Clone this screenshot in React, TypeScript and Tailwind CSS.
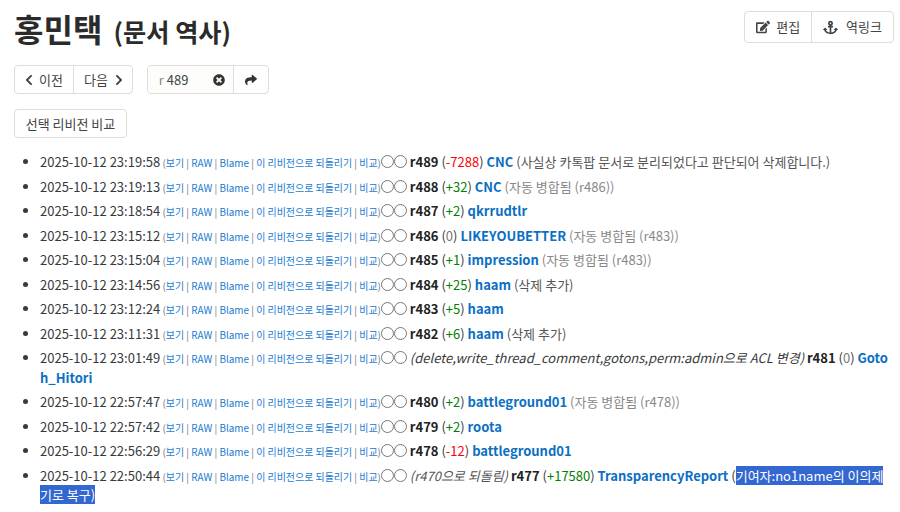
import React from 'react';
import { FaAnchor, FaChevronLeft, FaChevronRight, FaEdit, FaShare, FaTimesCircle } from 'react-icons/fa';

type Rev = {
  date: string;
  id: string;
  diff: string;
  user: string;
  note?: string;
  auto?: boolean;
  italic?: string;
};

const revisions: Rev[] = [
  { date: '2025-10-12 23:19:58', id: 'r489', diff: '-7288', user: 'CNC', note: '(사실상 카톡팝 문서로 분리되었다고 판단되어 삭제합니다.)' },
  { date: '2025-10-12 23:19:13', id: 'r488', diff: '+32', user: 'CNC', note: '(자동 병합됨 (r486))', auto: true },
  { date: '2025-10-12 23:18:54', id: 'r487', diff: '+2', user: 'qkrrudtlr' },
  { date: '2025-10-12 23:15:12', id: 'r486', diff: '0', user: 'LIKEYOUBETTER', note: '(자동 병합됨 (r483))', auto: true },
  { date: '2025-10-12 23:15:04', id: 'r485', diff: '+1', user: 'impression', note: '(자동 병합됨 (r483))', auto: true },
  { date: '2025-10-12 23:14:56', id: 'r484', diff: '+25', user: 'haam', note: '(삭제 추가)' },
  { date: '2025-10-12 23:12:24', id: 'r483', diff: '+5', user: 'haam' },
  { date: '2025-10-12 23:11:31', id: 'r482', diff: '+6', user: 'haam', note: '(삭제 추가)' },
  { date: '2025-10-12 23:01:49', id: 'r481', diff: '0', user: 'Gotoh_Hitori', italic: '(delete,write_thread_comment,gotons,perm:admin으로 ACL 변경)' },
  { date: '2025-10-12 22:57:47', id: 'r480', diff: '+2', user: 'battleground01', note: '(자동 병합됨 (r478))', auto: true },
  { date: '2025-10-12 22:57:42', id: 'r479', diff: '+2', user: 'roota' },
  { date: '2025-10-12 22:56:29', id: 'r478', diff: '-12', user: 'battleground01' },
];

const Diff = ({ value }: { value: string }) => (
  <span>
    (
    <span className={value.startsWith('+') ? 'text-[#008000]' : value.startsWith('-') ? 'text-[#ff0000]' : 'text-[#777]'}>{value}</span>
    )
  </span>
);

const Tools = () => (
  <span className="text-[9.95px] leading-none text-[#777]">
    {' ('}
    <a className="text-[#1a7bd0]">보기</a> | <a className="text-[#1a7bd0]">RAW</a> | <a className="text-[#1a7bd0]">Blame</a> |{' '}
    <a className="text-[#1a7bd0]">이 리비전으로 되돌리기</a> | <a className="text-[#1a7bd0]">비교</a>)
  </span>
);

const Radios = () => (
  <>
    <input type="radio" name="oldrev" className="m-0 h-[13px] w-[13px] align-[-1px]" readOnly />
    <input type="radio" name="rev" className="m-0 h-[13px] w-[13px] align-[-1px]" readOnly />
  </>
);

const Row = ({ rev }: { rev: Rev }) => (
  <li className="mb-[5px]">
    {rev.date}
    <Tools />
    <Radios />{' '}
    {rev.italic && <i>{rev.italic} </i>}
    <b className="text-[#222]">{rev.id}</b> <Diff value={rev.diff} />{' '}
    <a className="font-bold text-[#0b6fc4]">{rev.user}</a>
    {rev.note && <span className={rev.auto ? 'text-[#888]' : 'text-[#555]'}> {rev.note}</span>}
  </li>
);

export default function App() {
  return (
    <div className="h-[512px] w-[900px] overflow-hidden bg-white pl-[14px] pr-[6px] font-['Noto_Sans_CJK_KR','Noto_Sans',sans-serif] text-[#373a3c]">
      <div className="flex items-start justify-between pt-[11px]">
        <h1 className="mt-[-3px] text-[32px] leading-[40px] font-bold text-[#2b2b2b]">
          홍민택 <small className="ml-[4px] text-[25.2px] font-bold">(문서 역사)</small>
        </h1>
        <div className="flex h-[32px] items-center rounded-[4px] border border-[#ddd] text-[13px] text-[#444]">
          <span className="flex h-full items-center gap-[6px] border-r border-[#ddd] px-[11px]">
            <FaEdit className="h-[14px] w-[14px]" />
            편집
          </span>
          <span className="flex h-full items-center gap-[8px] px-[11px]">
            <FaAnchor className="h-[15px] w-[15px]" />
            역링크
          </span>
        </div>
      </div>

      <div className="mt-[14px] flex gap-[14px] text-[13px] text-[#444]">
        <div className="flex h-[29px] items-center rounded-[4px] border border-[#ddd]">
          <span className="flex h-full items-center gap-[6px] border-r border-[#ddd] px-[10px]">
            <FaChevronLeft className="h-[12px] w-[8px]" />
            이전
          </span>
          <span className="flex h-full items-center gap-[7px] pl-[10px] pr-[9px]">
            다음
            <FaChevronRight className="h-[12px] w-[8px]" />
          </span>
        </div>
        <div className="flex h-[29px] w-[122px] items-center rounded-[4px] border border-[#ddd]">
          <span className="flex h-full w-[86px] items-center justify-between rounded-l-[4px] border-r border-[#ddd] bg-[#fdfdfb] pl-[11px] pr-[8px]">
            <span>
              <span className="text-[#888]">r</span> 489
            </span>
            <FaTimesCircle className="h-[12px] w-[12px] text-[#333]" />
          </span>
          <span className="flex flex-1 items-center justify-center">
            <FaShare className="h-[12px] w-[12px] text-[#333]" />
          </span>
        </div>
      </div>

      <button className="mt-[15px] flex h-[29px] w-[113px] items-center justify-center rounded-[4px] border border-[#ddd] text-[13px] text-[#444]">
        선택 리비전 비교
      </button>

      <ul className="mt-[14px] list-disc pl-[26px] text-[13px] leading-[19.5px] break-all text-[#373a3c]">
        {revisions.map((rev) => (
          <Row key={rev.id} rev={rev} />
        ))}
        <li>
          2025-10-12 22:50:44
          <Tools />
          <Radios /> <i className="text-[#555]">(r470으로 되돌림)</i> <b className="text-[#222]">r477</b>{' '}
          <Diff value="+17580" /> <a className="font-bold text-[#0b6fc4]">TransparencyReport</a>{' '}
          <span>
            (<span className="bg-[#3367d1] text-white">기여자:no1name의 이의제기로 복구)</span>
          </span>
        </li>
      </ul>
    </div>
  );
}
